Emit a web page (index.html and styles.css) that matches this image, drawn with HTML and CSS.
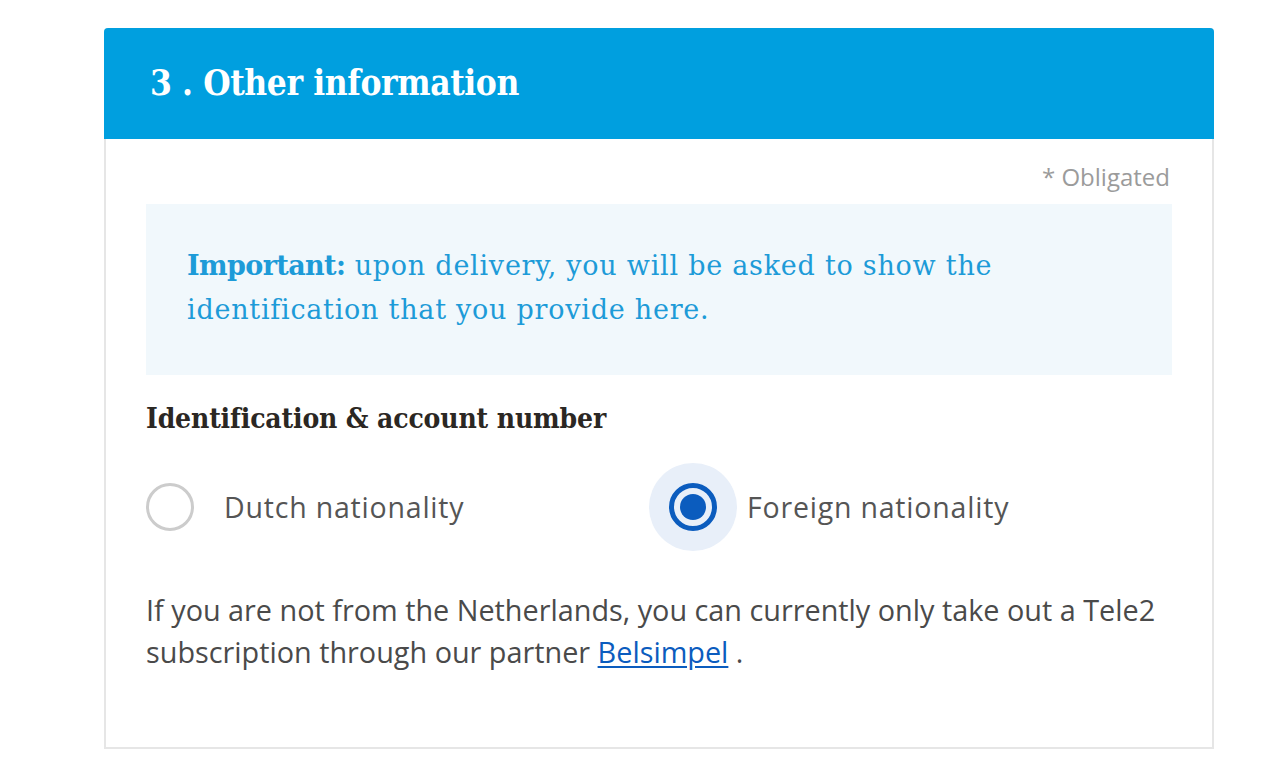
FILE: index.html
```html
<!DOCTYPE html>
<html>
<head>
<meta charset="utf-8">
<link rel="stylesheet" href="styles.css">
</head>
<body>
<div class="page">
  <section class="card">
    <header class="card-head">
      <h2 class="card-title">3 . Other information</h2>
    </header>
    <div class="card-body">
      <div class="obligated">* Obligated</div>
      <div class="notice">
        <p><strong>Important:</strong> upon delivery, you will be asked to show the identification that you provide here.</p>
      </div>
      <h3 class="section-title">Identification &amp; account number</h3>
      <div class="radios">
        <label class="radio">
          <span class="radio-hit"><span class="radio-ring"></span></span>
          <span class="radio-label">Dutch nationality</span>
        </label>
        <label class="radio checked">
          <span class="radio-hit"><span class="radio-ring"><span class="radio-dot"></span></span></span>
          <span class="radio-label">Foreign nationality</span>
        </label>
      </div>
      <p class="info">If you are not from the Netherlands, you can currently only take out a Tele2 subscription through our partner <a href="#">Belsimpel</a> .</p>
    </div>
  </section>
</div>
</body>
</html>
```

FILE: styles.css
```css
* { box-sizing: border-box; }
html, body { margin: 0; padding: 0; background: #fff; }
body { font-family: "Open Sans", "Liberation Sans", sans-serif; }
.page { padding: 28px 0 0 104px; }
.card {
  width: 1110px;
  height: 721px;
  border: 2px solid #e6e6e6;
  border-top: none;
  border-radius: 4px 4px 0 0;
}
.card-head {
  background: #009fdf;
  height: 111px;
  margin: 0 -2px;
  border-radius: 4px 4px 0 0;
  display: flex;
  align-items: center;
  padding-left: 46px;
}
.card-title {
  margin: 0;
  color: #fff;
  font-family: "DejaVu Serif", serif;
  font-stretch: condensed;
  font-weight: bold;
  font-size: 35px;
  letter-spacing: -0.4px;
  padding-bottom: 2px;
}
.card-body { padding: 22px 40px 0 40px; }
.obligated {
  text-align: right;
  color: #9b9b9b;
  font-size: 24px;
  line-height: 32px;
  padding-right: 2px;
}
.notice {
  margin-top: 11px;
  background: #f1f8fc;
  height: 171px;
  padding: 40px 41px 0;
}
.notice p {
  margin: 0;
  max-width: 860px;
  color: #1d9bd8;
  font-family: "DejaVu Serif", serif;
  font-size: 27px;
  line-height: 44px;
  letter-spacing: 0.75px;
}
.notice strong { font-weight: bold; letter-spacing: -0.6px; }
.section-title {
  margin: 26px 0 0;
  color: #2b2723;
  font-family: "DejaVu Serif", serif;
  font-stretch: condensed;
  font-weight: bold;
  font-size: 28px;
  line-height: 36px;
  letter-spacing: -0.15px;
}
.radios {
  display: flex;
  margin-top: 26px;
  margin-left: -20px;
}
.radio {
  display: flex;
  align-items: center;
  width: 526px;
}
.radio-hit {
  width: 88px;
  height: 88px;
  border-radius: 50%;
  display: flex;
  align-items: center;
  justify-content: center;
  flex: none;
}
.radio.checked .radio-hit { background: #e8eff9; }
.radio-ring {
  width: 48px;
  height: 48px;
  border-radius: 50%;
  border: 3px solid #cccccc;
  display: flex;
  align-items: center;
  justify-content: center;
}
.radio.checked .radio-ring { border: 5px solid #0b5cbe; }
.radio-dot {
  width: 26px;
  height: 26px;
  border-radius: 50%;
  background: #0b5cbe;
}
.radio-label {
  margin-left: 10px;
  color: #555;
  font-size: 28.5px;
  letter-spacing: 0.8px;
}
.info {
  margin: 38px 0 0;
  color: #4a4a4a;
  font-size: 28.8px;
  line-height: 42px;
}
.info a { color: #0b5cbe; text-decoration: underline; text-underline-offset: 3px; }
```
